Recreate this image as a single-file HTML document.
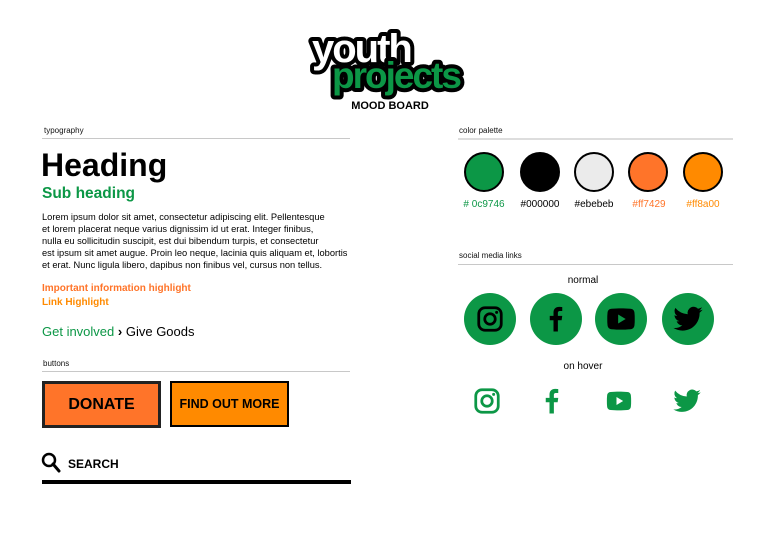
<!DOCTYPE html>
<html><head><meta charset="utf-8"><style>
*{margin:0;padding:0;box-sizing:border-box}
body{width:772px;height:545px;background:#fff;font-family:"Liberation Sans",sans-serif;position:relative;overflow:hidden;color:#000}
.a{position:absolute;white-space:nowrap}
.lbl{font-size:8px;color:#111}
.ln{position:absolute;height:1px;background:#c8c8c8}
.sw{position:absolute;width:40px;height:40px;border:2px solid #000;border-radius:50%;top:152px}
.hex{position:absolute;top:199px;font-size:10px;width:60px;text-align:center}
.sc{position:absolute;top:293px;width:52px;height:52px;border-radius:50%;background:#0c9746;display:flex;align-items:center;justify-content:center}
.hv{position:absolute;top:386px;width:30px;height:30px;display:flex;align-items:center;justify-content:center}
</style></head><body>
<svg class="a" style="left:300px;top:26px" width="190" height="78" viewBox="0 0 190 78">
<g font-family="Liberation Sans" font-weight="bold" stroke="#000" stroke-linejoin="round" paint-order="stroke">
<text x="12" y="36" font-size="40" fill="#fff" stroke-width="8" letter-spacing="-2">youth</text>
<text x="32" y="62" font-size="37" fill="#0c9746" stroke-width="8" letter-spacing="-2">projects</text>
</g></svg>
<div class="a" style="left:0;width:780px;text-align:center;top:100px;font-size:11px;font-weight:bold">MOOD BOARD</div>

<div class="a lbl" style="left:44px;top:126px">typography</div>
<div class="ln" style="left:42px;top:138px;width:308px"></div>
<div class="a" style="left:41px;top:147px;font-size:32px;font-weight:bold">Heading</div>
<div class="a" style="left:42px;top:185px;font-size:15.5px;font-weight:bold;color:#0c9746">Sub heading</div>
<div class="a" style="left:42px;top:211px;font-size:9.3px;line-height:12px">Lorem ipsum dolor sit amet, consectetur adipiscing elit. Pellentesque<br>et lorem placerat neque varius dignissim id ut erat. Integer finibus,<br>nulla eu sollicitudin suscipit, est dui bibendum turpis, et consectetur<br>est ipsum sit amet augue. Proin leo neque, lacinia quis aliquam et, lobortis<br>et erat. Nunc ligula libero, dapibus non finibus vel, cursus non tellus.</div>
<div class="a" style="left:42px;top:283px;font-size:10px;font-weight:bold;color:#ff7429">Important information highlight</div>
<div class="a" style="left:42px;top:297px;font-size:10px;font-weight:bold;color:#ff8a00">Link Highlight</div>
<div class="a" style="left:42px;top:324px;font-size:13px"><span style="color:#0c9746">Get involved</span> <b>&#x203A;</b> Give Goods</div>

<div class="a lbl" style="left:43px;top:359px">buttons</div>
<div class="ln" style="left:42px;top:371px;width:308px"></div>
<div class="a" style="left:42px;top:381px;width:119px;height:47px;background:#ff7429;border:3px solid #222;display:flex;align-items:center;justify-content:center;font-size:16px;font-weight:bold">DONATE</div>
<div class="a" style="left:170px;top:381px;width:119px;height:46px;background:#ff8a00;border:2px solid #000;display:flex;align-items:center;justify-content:center;font-size:12.5px;font-weight:bold">FIND OUT MORE</div>
<svg class="a" style="left:41px;top:452px" width="22" height="22" viewBox="0 0 22 22"><circle cx="8" cy="8" r="6" fill="none" stroke="#000" stroke-width="2.5"/><path d="M12 12l6 7" stroke="#000" stroke-width="3" stroke-linecap="round"/></svg>
<div class="a" style="left:68px;top:457px;font-size:12px;font-weight:bold">SEARCH</div>
<div class="a" style="left:42px;top:480px;width:309px;height:4px;background:#000"></div>

<div class="a lbl" style="left:459px;top:126px">color palette</div>
<div class="ln" style="left:458px;top:138px;width:275px;height:2px;background:#ddd"></div>
<div class="sw" style="left:464px;background:#0c9746"></div>
<div class="sw" style="left:520px;background:#000"></div>
<div class="sw" style="left:574px;background:#ebebeb"></div>
<div class="sw" style="left:628px;background:#ff7429"></div>
<div class="sw" style="left:683px;background:#ff8a00"></div>
<div class="hex" style="left:454px;color:#0c9746">#&nbsp;0c9746</div>
<div class="hex" style="left:510px">#000000</div>
<div class="hex" style="left:564px">#ebebeb</div>
<div class="hex" style="left:619px;color:#ff7429">#ff7429</div>
<div class="hex" style="left:673px;color:#ff8a00">#ff8a00</div>

<div class="a lbl" style="left:459px;top:251px">social media links</div>
<div class="ln" style="left:458px;top:264px;width:275px"></div>
<div class="a" style="left:540px;width:86px;text-align:center;top:275px;font-size:10px">normal</div>
<div class="a" style="left:540px;width:86px;text-align:center;top:361px;font-size:10px">on hover</div>

<svg width="0" height="0" style="position:absolute">
<defs>
<g id="ig"><rect x="3" y="3" width="18" height="18" rx="5" fill="none" stroke="currentColor" stroke-width="2.2"/><circle cx="12" cy="12" r="4.2" fill="none" stroke="currentColor" stroke-width="2.2"/><circle cx="17.3" cy="6.7" r="1.2" fill="currentColor"/></g>
<g id="fb"><path d="M13.5 22V13h3l.5-3.5h-3.5V7.3c0-1 .3-1.7 1.8-1.7H17V2.5c-.4-.1-1.4-.2-2.6-.2-2.6 0-4.4 1.6-4.4 4.5v2.7H7V13h3v9z" fill="currentColor"/></g>
<g id="yt"><path d="M2.5 7.5c.2-1.600 1.2-2.6 2.8-2.7C7.5 4.6 10 4.5 12 4.5s4.5.1 6.7.3c1.6.1 2.6 1.1 2.8 2.7.2 1.5.2 3 .2 4.5s0 3-.2 4.5c-.2 1.6-1.2 2.6-2.8 2.7-2.2.2-4.7.3-6.7.3s-4.5-.1-6.7-.3c-1.6-.1-2.6-1.1-2.8-2.7C2.3 15 2.3 13.5 2.3 12s0-3 .2-4.5z" fill="currentColor"/><path d="M10 8.8v6.4l5.3-3.2z" fill="#fff"/></g>
<g id="tw"><path d="M23 5c-.8.4-1.7.6-2.6.7.9-.6 1.6-1.4 2-2.5-.9.5-1.9.9-2.9 1.1A4.5 4.5 0 0 0 11.8 8.4 12.8 12.8 0 0 1 2.5 3.7a4.5 4.5 0 0 0 1.4 6c-.7 0-1.4-.2-2-.6 0 2.2 1.6 4 3.6 4.500-.7.2-1.4.2-2 .1.6 1.8 2.3 3.1 4.2 3.1A9 9 0 0 1 1 18.7 12.8 12.8 0 0 0 7.9 20.7c8.3 0 12.8-6.9 12.8-12.8v-.6c.9-.6 1.6-1.4 2.3-2.3z" fill="currentColor"/></g>
</defs></svg>

<div class="sc" style="left:464px"><svg width="30" height="30" viewBox="0 0 24 24" style="color:#000"><use href="#ig"/></svg></div>
<div class="sc" style="left:530px"><svg width="30" height="30" viewBox="0 0 24 24" style="color:#000"><use href="#fb"/></svg></div>
<div class="sc" style="left:595px"><svg width="34" height="34" viewBox="0 0 24 24"><path d="M2.5 7.5c.2-1.6 1.2-2.6 2.8-2.7C7.5 4.6 10 4.5 12 4.5s4.5.1 6.7.3c1.6.1 2.6 1.1 2.8 2.7.2 1.5.2 3 .2 4.5s0 3-.2 4.5c-.2 1.6-1.2 2.6-2.8 2.7-2.2.2-4.7.3-6.7.3s-4.5-.1-6.7-.3c-1.6-.1-2.6-1.1-2.8-2.7C2.3 15 2.3 13.5 2.3 12s0-3 .2-4.5z" fill="#000"/><path d="M10 8.8v6.4l5.3-3.2z" fill="#0c9746"/></svg></div>
<div class="sc" style="left:662px"><svg width="32" height="32" viewBox="0 0 24 24" style="color:#000"><use href="#tw"/></svg></div>

<div class="hv" style="left:472px"><svg width="30" height="30" viewBox="0 0 24 24" style="color:#0c9746"><use href="#ig"/></svg></div>
<div class="hv" style="left:537px"><svg width="30" height="30" viewBox="0 0 24 24" style="color:#0c9746"><use href="#fb"/></svg></div>
<div class="hv" style="left:604px"><svg width="34" height="34" viewBox="0 0 24 24" style="color:#0c9746"><use href="#yt"/></svg></div>
<div class="hv" style="left:672px"><svg width="32" height="32" viewBox="0 0 24 24" style="color:#0c9746"><use href="#tw"/></svg></div>
</body></html>
